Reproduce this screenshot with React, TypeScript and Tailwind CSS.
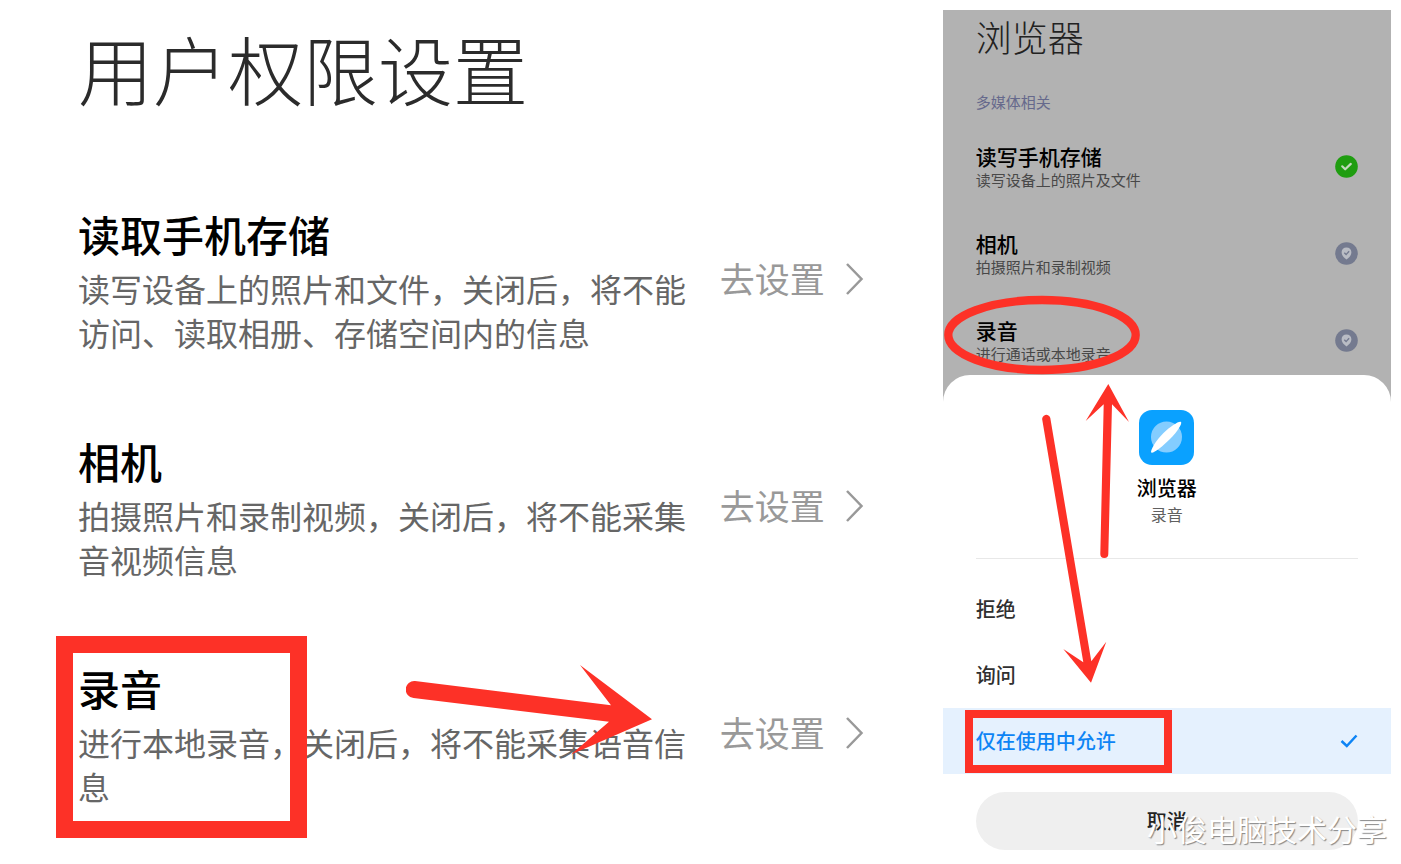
import React, { useState } from 'react';

interface Permission {
  title: string;
  description: string;
}

const permissions: Permission[] = [
  { title: '读取手机存储', description: '读写设备上的照片和文件，关闭后，将不能访问、读取相册、存储空间内的信息' },
  { title: '相机', description: '拍摄照片和录制视频，关闭后，将不能采集音视频信息' },
  { title: '录音', description: '进行本地录音，关闭后，将不能采集语音信息' },
];

const phonePermissions = [
  { title: '读写手机存储', description: '读写设备上的照片及文件', granted: true },
  { title: '相机', description: '拍摄照片和录制视频', granted: false },
  { title: '录音', description: '进行通话或本地录音', granted: false },
];

const options = ['拒绝', '询问', '仅在使用中允许'];

const GrantedIcon = () => (
  <svg viewBox="0 0 23 23" className="w-[23px] h-[23px] shrink-0">
    <circle cx="11.5" cy="11.5" r="11.3" fill="#1f9d10" />
    <path d="M7.2 11.3l3 3 5.6-5.4" fill="none" stroke="#c3d8bd" strokeWidth="2.2" strokeLinecap="round" strokeLinejoin="round" />
  </svg>
);

const AskIcon = () => (
  <svg viewBox="0 0 23 23" className="w-[23px] h-[23px] shrink-0">
    <circle cx="11.5" cy="11.5" r="11.3" fill="#747a8f" />
    <path d="M11.5 5.6c2.8 0 4.9 1.7 4.9 4.7 0 2.900-2 5-4.900 7.300-2.900-2.300-4.900-4.400-4.900-7.300 0-3 2.100-4.700 4.900-4.700z" fill="#b9bcc4" />
    <path d="M9.300 10.800l1.800 1.800 3-3.400" fill="none" stroke="#747a8f" strokeWidth="1.400" />
  </svg>
);

const BrowserLogo = () => (
  <svg viewBox="0 0 55 55" className="w-[55px] h-[55px]">
    <rect width="55" height="55" rx="13" fill="#0aa1ff" />
    <circle cx="27.5" cy="27" r="15.500" fill="#84cdff" />
    <path d="M12.300 42.500c-1.500-1.500 4.500-12 12.200-19.500 7.500-7.200 16-12.500 17.500-11s-3.500 9.500-11 17c-7.500 7.600-17.200 15-18.700 13.500z" fill="#fff" />
  </svg>
);

const SettingsPage: React.FC = () => (
  <section className="flex-1 min-w-0 pt-6 px-[78px]">
    <h1 className="text-[75px] leading-[88px] font-light text-[#2b2b2b]">用户权限设置</h1>
    <ul className="mt-[90px] space-y-[75px]">
      {permissions.map((item, idx) => (
        <li key={item.title} className="relative flex items-center justify-between">
          <div className="w-[608px] shrink-0">
            <h2 className="text-[42px] leading-[64px] font-medium text-black">{item.title}</h2>
            <p className="text-[32px] leading-[44px] text-[#666666]">{item.description}</p>
          </div>
          <button className="flex items-center gap-5 shrink-0 text-[35px] leading-[44px] text-[#999999]">
            <span>去设置</span>
            <svg viewBox="0 0 20 34" className="w-5 h-[34px]">
              <path d="M2 3l14.500 15L2 33" fill="none" stroke="#999999" strokeWidth="2.500" />
            </svg>
          </button>
          {idx === 2 && (
            <>
              <div className="absolute -left-[22px] -top-5 w-[251px] h-[202px] border-[17px] border-[#fd3127]" />
              <svg viewBox="0 0 246 90" className="absolute left-[328px] top-[9px] w-[246px] h-[90px]">
                <path d="M9 16L205 40.300 174 0 246 54.300 165 89.500 203 56.700 7.500 33A8.300 8.300 0 0 1 9 16z" fill="#fd3127" />
              </svg>
            </>
          )}
        </li>
      ))}
    </ul>
  </section>
);

const PhonePanel: React.FC = () => {
  const [selected, setSelected] = useState<string>('仅在使用中允许');

  return (
    <section className="relative w-[32%] shrink-0 mt-[10px] mr-[10px] bg-[#b2b2b2]">
      <div className="px-[33px] pt-[2px] pb-[11px]">
        <h1 className="text-[36px] leading-[48px] font-light text-[#222222]">浏览器</h1>
        <h2 className="mt-8 text-[15px] leading-5 text-[#66698c]">多媒体相关</h2>
        <ul className="mt-[30px] space-y-[39px]">
          {phonePermissions.map((item) => (
            <li key={item.title} className="flex items-center justify-between">
              <div>
                <h3 className="text-[21px] leading-7 font-medium text-black">{item.title}</h3>
                <p className="text-[15px] leading-5 text-[#484848]">{item.description}</p>
              </div>
              {item.granted ? <GrantedIcon /> : <AskIcon />}
            </li>
          ))}
        </ul>
      </div>

      {/* Bottom sheet */}
      <div className="bg-white rounded-t-[27px] pt-[35px] pb-1">
        <div className="flex flex-col items-center">
          <BrowserLogo />
          <h2 className="mt-[9px] text-[20px] leading-7 font-medium text-black">浏览器</h2>
          <p className="text-[16px] leading-6 text-[#606060]">录音</p>
        </div>
        <hr className="mx-[33px] mt-8 border-[#e8e8e8]" />
        <div className="mt-[17px]">
          {options.map((option) => {
            const active = option === selected;
            return (
              <label
                key={option}
                className={`relative flex items-center justify-between h-[66px] px-[33px] text-[20px] font-medium cursor-pointer ${
                  active ? 'bg-[#e5f1fe] text-[#0d84f5]' : 'text-[#303030]'
                }`}
              >
                <input
                  type="radio"
                  name="permission"
                  className="sr-only"
                  checked={active}
                  onChange={() => setSelected(option)}
                />
                <span>{option}</span>
                {active && (
                  <svg viewBox="0 0 18 14" className="w-[18px] h-[14px]">
                    <path d="M1.500 7l5.300 5L16.500 1.500" fill="none" stroke="#0d84f5" strokeWidth="2.500" />
                  </svg>
                )}
                {option === '仅在使用中允许' && (
                  <span className="absolute left-[22px] top-[2px] w-[207px] h-[63px] border-8 border-[#fd3127]" />
                )}
              </label>
            );
          })}
        </div>
        <div className="px-[33px] mt-[18px]">
          <button className="w-full h-[58px] rounded-full bg-[#efefef] text-[20px] font-medium text-[#222222]">取消</button>
        </div>
      </div>

      {/* Hand-drawn marks */}
      <svg viewBox="0 0 448 844" className="absolute left-0 top-0 w-[448px] h-[844px] pointer-events-none" fill="#fd3127">
        <ellipse cx="99" cy="325" rx="93.700" ry="35" fill="none" stroke="#fd3127" strokeWidth="8.300" />
        <path d="M165.300 374L186 412 169 394.300 165.300 544a4 4 0 0 1-8 0L160.700 394.300 142.700 411z" />
        <path d="M107.300 408L148.300 651.300 163.300 631.700 148 672.700 120.300 639 140.300 652.300 99.300 410a4 4 0 0 1 8-2z" />
      </svg>
      <p className="absolute right-1 bottom-1.5 text-[30px] leading-10 text-white whitespace-nowrap [text-shadow:1px_1px_1px_#888888]">
        小俊电脑技术分享
      </p>
    </section>
  );
};

const App: React.FC = () => {
  return (
    <main className="min-h-screen flex items-start bg-white font-['Noto_Sans_CJK_SC',sans-serif]">
      <SettingsPage />
      <PhonePanel />
    </main>
  );
};

export default App;
